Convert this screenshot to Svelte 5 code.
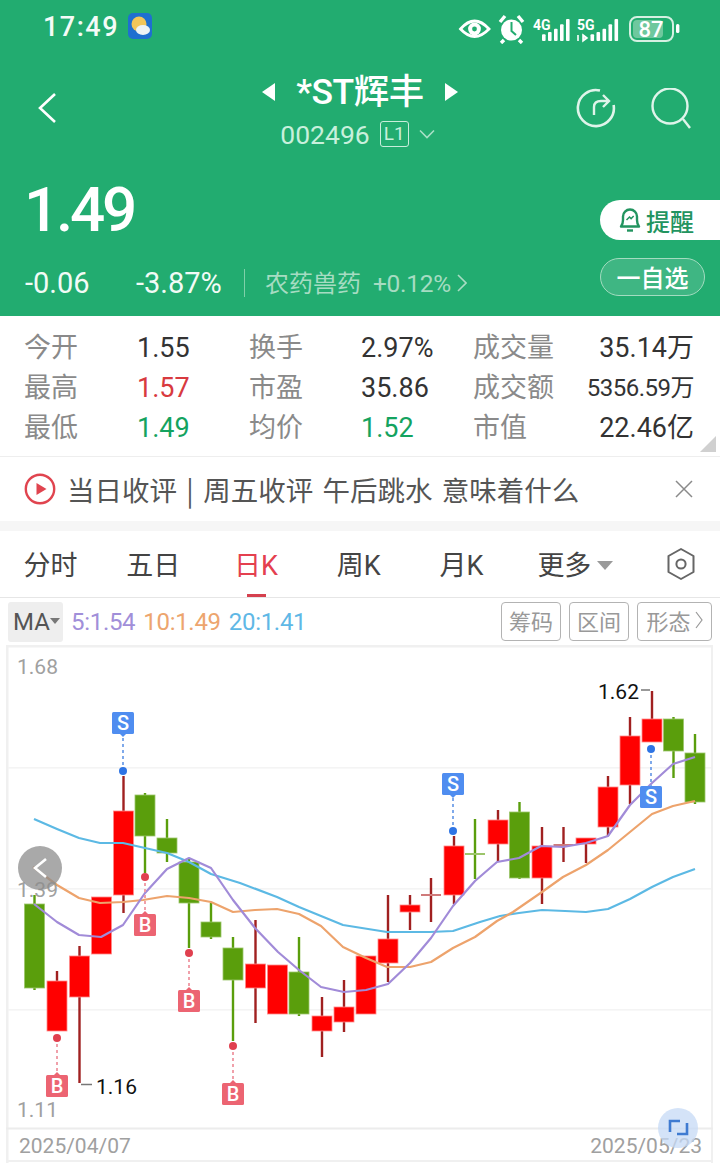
<script>
  const candles = [
    { x: 34.5, c: 'g', t: 904, b: 988, hi: 895, lo: 990 },
    { x: 57, c: 'r', t: 981, b: 1031, hi: 971, lo: 1031 },
    { x: 79.5, c: 'r', t: 956, b: 997, hi: 946, lo: 1083 },
    { x: 101.5, c: 'r', t: 897, b: 954, hi: 897, lo: 954 },
    { x: 123.5, c: 'r', t: 811, b: 895, hi: 776, lo: 913 },
    { x: 145, c: 'g', t: 795, b: 836, hi: 793, lo: 873 },
    { x: 167, c: 'g', t: 838, b: 853, hi: 819, lo: 862 },
    { x: 189, c: 'g', t: 862, b: 903, hi: 858, lo: 948 },
    { x: 211, c: 'g', t: 922, b: 937, hi: 903, lo: 939 },
    { x: 233, c: 'g', t: 948, b: 980, hi: 937, lo: 1041 },
    { x: 255.5, c: 'r', t: 964, b: 988, hi: 920, lo: 1023 },
    { x: 277.5, c: 'r', t: 965, b: 1014, hi: 965, lo: 1014 },
    { x: 299, c: 'g', t: 972, b: 1014, hi: 937, lo: 1016 },
    { x: 322, c: 'r', t: 1016, b: 1031, hi: 997, lo: 1057 },
    { x: 344, c: 'r', t: 1007, b: 1022, hi: 980, lo: 1032 },
    { x: 366, c: 'r', t: 956, b: 1014, hi: 956, lo: 1014 },
    { x: 388, c: 'r', t: 939, b: 963, hi: 895, lo: 982 },
    { x: 410, c: 'r', t: 905, b: 912, hi: 895, lo: 930 },
    { x: 431, c: 'r', t: 895, b: 896, hi: 878, lo: 922, doji: true },
    { x: 454, c: 'r', t: 846, b: 895, hi: 836, lo: 904 },
    { x: 475, c: 'g', t: 854, b: 855, hi: 819, lo: 879, doji: true },
    { x: 498, c: 'r', t: 820, b: 844, hi: 810, lo: 861 },
    { x: 519.5, c: 'g', t: 812, b: 878, hi: 802, lo: 879 },
    { x: 542, c: 'r', t: 846, b: 878, hi: 827, lo: 904 },
    { x: 563.5, c: 'r', t: 845, b: 846, hi: 827, lo: 862, doji: true },
    { x: 586, c: 'r', t: 838, b: 844, hi: 838, lo: 863 },
    { x: 608, c: 'r', t: 787, b: 827, hi: 776, lo: 836 },
    { x: 630, c: 'r', t: 736, b: 785, hi: 717, lo: 804 },
    { x: 652, c: 'r', t: 719, b: 742, hi: 691, lo: 742 },
    { x: 673.5, c: 'g', t: 719, b: 751, hi: 717, lo: 778 },
    { x: 695, c: 'g', t: 753, b: 802, hi: 734, lo: 804 }
  ];

  const ma5 = '34,904 57,922 79,935 101,937 123,925 145,893 167,869 189,858 211,868 233,900 255,928 278,952 299,970 321,987 344,992 366,990 388,984 410,963 431,938 453,906 475,881 497,862 519,858 541,846 563,847 586,843 608,836 630,805 652,783 673,764 695,757';
  const ma10 = '33,867 57,885 79,898 100,903 123,902 143,900 167,896 189,898 211,902 233,912 255,910 277,909 299,914 321,926 343,947 366,958 387,967 410,967 431,962 453,948 475,937 497,921 513,912 542,892 563,877 586,865 608,850 630,832 652,814 673,806 695,801';
  const ma20 = '34,819 57,829 79,838 100,843 123,843 145,848 167,853 189,862 211,874 240,883 277,897 299,907 343,925 387,932 430,932 453,931 480,922 500,916 519,913 542,910 565,911 586,912 608,909 630,899 652,887 673,877 695,869';

  const marks = [
    { k: 'S', x: 123, box: 712, dot: 771 },
    { k: 'B', x: 145, box: 914, dot: 877 },
    { k: 'B', x: 189, box: 990, dot: 953 },
    { k: 'B', x: 233, box: 1083, dot: 1046 },
    { k: 'B', x: 57, box: 1075, dot: 1038 },
    { k: 'S', x: 453, box: 773, dot: 831 },
    { k: 'S', x: 651, box: 786, dot: 749, flat: true }
  ];

  const stats = [
    ['今开', '1.55', '', '换手', '2.97%', '', '成交量', '35.14万', ''],
    ['最高', '1.57', 'up', '市盈', '35.86', '', '成交额', '5356.59万', 'small'],
    ['最低', '1.49', 'down', '均价', '1.52', 'down', '市值', '22.46亿', '']
  ];

  const tabs = ['分时', '五日', '日K', '周K', '月K', '更多'];
  const bars = (x0) => [20, 27, 37, 50, 66].map((h, i) => ({ x: x0 + i * 6, h: h / 3 }));
</script>

<div class="page">
  <header class="head">
    <div class="status">
      <span class="clock">17:49</span>
      <svg class="weather" viewBox="0 0 24 26" width="24" height="26">
        <rect width="24" height="26" rx="5" fill="#1f6fd0" />
        <circle cx="11" cy="11" r="7.5" fill="#f3c659" />
        <ellipse cx="15" cy="17" rx="7" ry="5" fill="#eef3f5" />
      </svg>
      <span class="spacer"></span>
      <svg class="sysicons" viewBox="458 10 224 32" width="224" height="32">
        <path d="M460.5 27 Q474.5 11 489 27 Q474.5 42 460.5 27Z" fill="none" stroke="#fff" stroke-width="2.8" />
        <circle cx="474.5" cy="27" r="6.4" fill="#fff" />
        <circle cx="474.5" cy="27" r="2.4" fill="#22ac70" />
        <circle cx="511.5" cy="28" r="10.5" fill="#fff" />
        <path d="M511.5 20V29L516 33" fill="none" stroke="#22ac70" stroke-width="2" />
        <path d="M500 20 L505 14M523 20 L518 14M504 38l-3 3M519 38l3 3" stroke="#fff" stroke-width="3.4" />
        <text class="net" x="533" y="28">4G</text>
        {#each bars(542) as b}
          <rect x={b.x} y={39 - b.h} width="3.6" height={b.h} rx="1" fill="#fff" />
        {/each}
        <text class="net" x="577" y="28">5G</text>
        <path d="M578 33v6M583 33l4 3-4 3Z" stroke="#fff" stroke-width="1.6" fill="#cfeede" />
        {#each bars(590.5) as b}
          <rect x={b.x} y={39 - b.h} width="3.6" height={b.h} rx="1" fill="#fff" />
        {/each}
        <rect x="630" y="15" width="43" height="24" rx="7" fill="none" stroke="#d5f0e2" stroke-width="2" />
        <rect x="633" y="18" width="30" height="18" rx="4" fill="#6fc89e" />
        <text class="batt" x="651" y="35" text-anchor="middle">87</text>
        <rect x="676" y="22" width="3.4" height="9" rx="1.5" fill="#fff" />
      </svg>
    </div>

    <div class="nav">
      <svg class="back" viewBox="0 0 20 32" width="20" height="32">
        <path d="M18 2 3 16 18 30" fill="none" stroke="#fff" stroke-width="2.6" />
      </svg>
      <div class="title-wrap">
        <div class="title">
          <i class="arrow left"></i>
          <span class="name">*ST辉丰</span>
          <i class="arrow right"></i>
        </div>
        <div class="code">
          <span class="digits">002496</span>
          <span class="l1">L1</span>
          <svg viewBox="0 0 16 10" width="16" height="10">
            <path d="M1 1.5 8 8.5 15 1.5" fill="none" stroke="#a8e0c6" stroke-width="1.6" />
          </svg>
        </div>
      </div>
      <div class="nav-actions">
        <svg viewBox="0 0 40 40" width="40" height="40">
          <path d="M24 2.6A18 18 0 1 0 37.6 17" fill="none" stroke="#dff4ea" stroke-width="2.6" />
          <path d="M18 27V19Q18 13 25 13H33M27 7l6 6-6 6" fill="none" stroke="#dff4ea" stroke-width="2.4" />
        </svg>
        <svg viewBox="0 0 42 42" width="42" height="42">
          <circle cx="20" cy="18" r="17.5" fill="none" stroke="#dff4ea" stroke-width="2.4" />
          <path d="M33 31 40 40" stroke="#dff4ea" stroke-width="2.4" />
        </svg>
      </div>
    </div>

    <div class="quote">
      <div class="quote-left">
        <div class="price">1.49</div>
        <div class="change">
          <span class="chg1">-0.06</span>
          <span class="chg2">-3.87%</span>
          <i class="vline"></i>
          <span class="sector">农药兽药</span>
          <span class="sector-pct">+0.12%</span>
          <svg viewBox="0 0 10 20" width="10" height="20">
            <path d="M1 2 9 10 1 18" fill="none" stroke="#a9dcc3" stroke-width="1.6" />
          </svg>
        </div>
      </div>
      <div class="quote-right">
        <div class="remind">
          <svg viewBox="0 0 24 26" width="24" height="26">
            <path d="M3 19.5Q5 17 5 13V9.5A7 7 0 0 1 19 9.5V13Q19 17 21 19.5Z" fill="none" stroke="#22945f" stroke-width="2.4" stroke-linejoin="round" />
            <path d="M9 23.5h6" stroke="#22945f" stroke-width="2.4" />
            <path d="M8.5 13l3-3 1.6 1.6 2.6-2.6" fill="none" stroke="#22945f" stroke-width="1.5" />
          </svg>
          <span>提醒</span>
        </div>
        <div class="watch">一自选</div>
      </div>
    </div>
  </header>

  <section class="stats">
    {#each stats as row}
      <div class="stat-row">
        <span class="lab">{row[0]}</span>
        <span class="val {row[2]}">{row[1]}</span>
        <span class="lab">{row[3]}</span>
        <span class="val {row[5]}">{row[4]}</span>
        <span class="lab">{row[6]}</span>
        <span class="val right {row[8]}">{row[7]}</span>
      </div>
    {/each}
    <i class="corner"></i>
  </section>

  <section class="news">
    <svg viewBox="0 0 32 32" width="32" height="32">
      <circle cx="16" cy="16" r="14.2" fill="none" stroke="#e0444f" stroke-width="2.4" />
      <path d="M12.5 10 22.5 16 12.5 22Z" fill="#e0444f" />
    </svg>
    <span class="news-text">当日收评 | 周五收评 午后跳水 意味着什么</span>
    <svg class="close" viewBox="0 0 18 18" width="18" height="18">
      <path d="M1 1 17 17M17 1 1 17" stroke="#8a8a8a" stroke-width="1.5" />
    </svg>
  </section>

  <div class="band"></div>

  <nav class="tabs">
    {#each tabs as t, i}
      <div class="tab" class:active={i === 2}>
        <span>{t}</span>
        {#if i === 5}<i class="tri"></i>{/if}
        {#if i === 2}<i class="under"></i>{/if}
      </div>
    {/each}
    <svg class="hex" viewBox="0 0 30 34" width="30" height="34">
      <path d="M15 2 27.5 9V25L15 32 2.5 25V9Z" fill="none" stroke="#666" stroke-width="2" stroke-linejoin="round" />
      <circle cx="15" cy="17" r="4.6" fill="none" stroke="#666" stroke-width="2" />
    </svg>
  </nav>

  <div class="ma-row">
    <div class="ma-btn">MA<i></i></div>
    <span class="ma m5">5:1.54</span>
    <span class="ma m10">10:1.49</span>
    <span class="ma m20">20:1.41</span>
    <span class="spacer"></span>
    <span class="tool">筹码</span>
    <span class="tool">区间</span>
    <span class="tool wide">形态
      <svg viewBox="0 0 8 18" width="8" height="18">
        <path d="M1 1 7 9 1 17" fill="none" stroke="#999" stroke-width="1.2" />
      </svg>
    </span>
  </div>

  <svg class="chart" viewBox="0 645 720 518" width="720" height="518">
    <rect x="6" y="645" width="2.5" height="518" fill="#f0f0f0" />
    <rect x="711" y="645" width="2" height="518" fill="#f0f0f0" />
    <rect x="6" y="645" width="707" height="2.5" fill="#f0f0f0" />
    {#each [767, 888, 1009] as y}
      <rect x="8" {y} width="703" height="1.6" fill="#f4f4f4" />
    {/each}
    <rect x="6" y="1127.5" width="707" height="2" fill="#ececec" />
    <rect x="6" y="1160" width="707" height="2" fill="#f0f0f0" />

    {#each candles as k}
      <line x1={k.x} x2={k.x} y1={k.hi} y2={k.lo} class={k.c === 'r' ? 'wick-r' : 'wick-g'} />
      {#if k.doji}
        <line x1={k.x - 10} x2={k.x + 10} y1={k.t} y2={k.t} class={k.c === 'r' ? 'doji-r' : 'doji-g'} />
      {:else}
        <rect x={k.x - 10} y={k.t} width="20" height={k.b - k.t} class={k.c === 'r' ? 'body-r' : 'body-g'} />
      {/if}
    {/each}

    <polyline points={ma20} class="line l20" />
    <polyline points={ma10} class="line l10" />
    <polyline points={ma5} class="line l5" />

    {#each marks as m}
      {@const isS = m.k === 'S'}
      <line x1={m.x} x2={m.x} y1={m.dot} y2={m.box < m.dot ? m.box + 22 : m.box} class={isS ? 'dash-s' : 'dash-b'} />
      <circle cx={m.x} cy={m.dot} r="4" fill={isS ? '#2e74e4' : '#e0404f'} />
      <rect x={m.x - 11} y={m.box} width="22" height="22" rx="1.5" fill={isS ? '#4f8df0' : '#ec6472'} />
      {#if !m.flat}
        {#if isS}
          <path d="M{m.x - 4} {m.box + 21}h8l-4 4Z" fill="#4f8df0" />
        {:else}
          <path d="M{m.x - 4} {m.box + 1}h8l-4 -4Z" fill="#ec6472" />
        {/if}
      {/if}
      <text x={m.x} y={m.box + 18} class="mark-t" text-anchor="middle">{m.k}</text>
    {/each}

    <line x1="81" x2="92" y1="1084.5" y2="1084.5" stroke="#777" stroke-width="1.5" />
    <text x="96" y="1094" class="ext">1.16</text>
    <line x1="641" x2="650" y1="690" y2="690" stroke="#777" stroke-width="1.5" />
    <text x="598" y="699" class="ext">1.62</text>

    <text x="17" y="674" class="axis">1.68</text>
    <text x="17" y="897" class="axis">1.39</text>
    <text x="17" y="1117" class="axis">1.11</text>
    <text x="19" y="1153" class="axis">2025/04/07</text>
    <text x="702" y="1153" class="axis" text-anchor="end">2025/05/23</text>

    <circle cx="40" cy="868" r="22" fill="#8c8c8c" opacity="0.75" />
    <path d="M46 859 35 868 46 877" fill="none" stroke="#fff" stroke-width="2.6" />

    <circle cx="678" cy="1128" r="20" fill="#c6d9f6" opacity="0.75" />
    <path d="M670 1132V1121H680M687 1123V1134H677" fill="none" stroke="#3f7bd1" stroke-width="2.6" />
  </svg>
</div>

<style>
  :global(body) {
    margin: 0;
    background: #fff;
  }
  .page {
    width: 720px;
    height: 1163px;
    overflow: hidden;
    font-family: Roboto, "Noto Sans CJK SC", sans-serif;
    color: #333;
  }
  .head {
    background: #22ac70;
    height: 316px;
    color: #fff;
    box-sizing: border-box;
  }
  .spacer {
    flex: 1;
  }
  .status {
    display: flex;
    align-items: center;
    height: 54px;
    padding: 0 40px 0 43px;
    gap: 9px;
  }
  .clock {
    font-family: Roboto, sans-serif;
    font-size: 27px;
    letter-spacing: 1.5px;
    font-weight: 500;
    color: #f4fbf7;
  }
  .weather {
    margin-top: -2px;
  }
  .sysicons {
    margin-right: -2px;
    margin-top: 2px;
  }
  .net {
    font: 700 14px Roboto, sans-serif;
    fill: #fff;
  }
  .batt {
    font: 500 22px Roboto, sans-serif;
    fill: #fff;
  }
  .nav {
    display: flex;
    justify-content: space-between;
    height: 104px;
    padding: 16px 28px 0 37px;
    box-sizing: border-box;
    position: relative;
  }
  .back {
    margin-top: 22px;
  }
  .title-wrap {
    position: absolute;
    left: 0;
    right: 0;
    top: 16px;
    display: flex;
    flex-direction: column;
    align-items: center;
    pointer-events: none;
  }
  .title {
    display: flex;
    align-items: center;
    gap: 21px;
    height: 44px;
  }
  .name {
    font-family: Roboto, "Noto Sans CJK SC", sans-serif;
    font-size: 35.5px;
    font-weight: 500;
    letter-spacing: -0.5px;
    line-height: 44px;
  }
  .arrow {
    width: 0;
    height: 0;
    border-top: 9px solid transparent;
    border-bottom: 9px solid transparent;
  }
  .arrow.left {
    border-right: 13px solid #fff;
  }
  .arrow.right {
    border-left: 13px solid #fff;
  }
  .code {
    display: flex;
    align-items: center;
    gap: 10px;
    height: 30px;
    margin-top: 5px;
    margin-left: -5px;
    color: #c8f0dc;
  }
  .digits {
    font-family: Roboto, sans-serif;
    font-size: 26.5px;
    letter-spacing: 0;
  }
  .l1 {
    width: 29px;
    height: 26px;
    border: 1px solid #c8eedb;
    border-radius: 3px;
    box-sizing: border-box;
    text-align: center;
    font: 400 19px/24px Roboto, sans-serif;
  }
  .nav-actions {
    display: flex;
    gap: 34px;
    margin-top: 18px;
    height: 42px;
  }
  .nav-actions svg {
    display: block;
  }
  .quote {
    display: flex;
    justify-content: space-between;
  }
  .quote-left {
    padding: 16px 0 0 26px;
  }
  .price {
    font-family: Roboto, sans-serif;
    font-size: 62px;
    font-weight: 500;
    line-height: 72px;
    letter-spacing: -3.2px;
    margin-left: -2px;
    color: #fff;
  }
  .change {
    display: flex;
    align-items: center;
    height: 32px;
    margin-top: 21px;
    margin-left: -1px;
    font-family: Roboto, "Noto Sans CJK SC", sans-serif;
    font-size: 29px;
    letter-spacing: 0;
    color: #f2fbf6;
  }
  .chg1 {
    width: 111px;
  }
  .chg2 {
    width: 108px;
  }
  .vline {
    width: 1px;
    height: 28px;
    background: #7fd0a9;
    margin-right: 20px;
  }
  .sector {
    color: #a6dcc2;
    font-size: 24px;
    letter-spacing: 0;
    width: 108px;
    margin-top: -3px;
  }
  .sector-pct {
    color: #a6dcc2;
    font-size: 24.5px;
    letter-spacing: -0.3px;
    margin-right: 6px;
  }
  .quote-right {
    display: flex;
    flex-direction: column;
    align-items: flex-start;
    width: 120px;
    padding-top: 42px;
    gap: 18px;
  }
  .remind {
    width: 120px;
    height: 40px;
    background: #fff;
    border-radius: 20px 0 0 20px;
    display: flex;
    align-items: center;
    gap: 4px;
    padding-left: 18px;
    box-sizing: border-box;
    color: #22945f;
    font: 500 24px "Noto Sans CJK SC", sans-serif;
  }
  .watch {
    width: 105px;
    height: 38px;
    border: 1px solid #a3dcc0;
    background: #3fb683;
    border-radius: 19px;
    box-sizing: border-box;
    text-align: center;
    font: 500 24px/35px "Noto Sans CJK SC", sans-serif;
    color: #fff;
  }
  .stats {
    height: 141px;
    padding: 11px 26px 0 24px;
    box-sizing: border-box;
    position: relative;
    border-bottom: 1px solid #eee;
  }
  .stat-row {
    display: grid;
    grid-template-columns: 113px 112px 112px 112px 1fr auto;
    height: 40px;
    align-items: center;
    line-height: 40px;
  }
  .lab {
    font: 400 27px/36px "Noto Sans CJK SC", sans-serif;
    color: #8a8a8a;
    margin-top: -4px;
  }
  .val {
    font-family: Roboto, "Noto Sans CJK SC", sans-serif;
    font-size: 27px;
    line-height: 42px;
    letter-spacing: 0;
    color: #333;
  }
  .val.right {
    grid-column: 6;
    text-align: right;
  }
  .val.up {
    color: #d83a3f;
  }
  .val.down {
    color: #14a35f;
  }
  .val.small {
    font-size: 24px;
    letter-spacing: -0.5px;
  }
  .corner {
    position: absolute;
    right: 4px;
    bottom: 4px;
    width: 0;
    height: 0;
    border-left: 16px solid transparent;
    border-bottom: 16px solid #d0d0d0;
  }
  .news {
    height: 64px;
    display: flex;
    align-items: center;
    padding: 0 27px 0 24px;
    box-sizing: border-box;
    gap: 11px;
  }
  .news-text {
    flex: 1;
    font: 400 27.5px "Noto Sans CJK SC", sans-serif;
    word-spacing: 3.2px;
    color: #555;
    white-space: nowrap;
  }
  .band {
    height: 10px;
    background: #f6f6f6;
  }
  .tabs {
    height: 66px;
    display: grid;
    grid-template-columns: repeat(6, 102.8px) 1fr;
    align-items: center;
    position: relative;
    border-bottom: 1px solid #e6e6e6;
    box-sizing: content-box;
    margin-left: -1px;
  }
  .tab {
    position: relative;
    text-align: center;
    font: 400 27px/70px Roboto, "Noto Sans CJK SC", sans-serif;
    color: #444;
    height: 66px;
  }
  .tab.active {
    color: #e4404f;
  }
  .tri {
    position: absolute;
    left: calc(50% + 33px);
    top: 30px;
    width: 0;
    height: 0;
    border-left: 8px solid transparent;
    border-right: 8px solid transparent;
    border-top: 9px solid #9a9a9a;
  }
  .under {
    position: absolute;
    left: 50%;
    bottom: 0;
    margin-left: -9px;
    width: 19px;
    height: 3px;
    background: #d5404e;
  }
  .hex {
    justify-self: end;
    margin-right: 24px;
  }
  .ma-row {
    height: 47px;
    display: flex;
    align-items: center;
    padding: 0 8px;
    box-sizing: border-box;
    gap: 8px;
  }
  .ma-btn {
    width: 55px;
    height: 40px;
    background: #eee;
    border-radius: 3px;
    font: 400 24px/40px Roboto, sans-serif;
    color: #555;
    padding-left: 5px;
    box-sizing: border-box;
    position: relative;
  }
  .ma-btn i {
    position: absolute;
    right: 3px;
    top: 16px;
    width: 0;
    height: 0;
    border-left: 5px solid transparent;
    border-right: 5px solid transparent;
    border-top: 6px solid #777;
  }
  .ma {
    font: 400 24px Roboto, sans-serif;
    letter-spacing: -0.3px;
  }
  .m5 {
    color: #a18fd9;
  }
  .m10 {
    color: #eda56e;
  }
  .m20 {
    color: #5fb8e6;
  }
  .tool {
    width: 60px;
    height: 39px;
    border: 1px solid #b3b3b3;
    border-radius: 4px;
    box-sizing: border-box;
    padding-bottom: 3px;
    font: 400 22px/36px "Noto Sans CJK SC", sans-serif;
    color: #999;
    text-align: center;
    display: flex;
    align-items: center;
    justify-content: center;
    gap: 4px;
  }
  .tool.wide {
    width: 75px;
  }
  .chart {
    display: block;
  }
  .wick-r {
    stroke: #a02020;
    stroke-width: 2.4;
  }
  .wick-g {
    stroke: #5a9e0c;
    stroke-width: 2.4;
  }
  .doji-r {
    stroke: #cf7a7a;
    stroke-width: 2;
  }
  .doji-g {
    stroke: #9cc56b;
    stroke-width: 2;
  }
  .body-r {
    fill: #ff0000;
    stroke: #ff8a8a;
    stroke-width: 0.8;
  }
  .body-g {
    fill: #5a9e0c;
    stroke: #9cc56b;
    stroke-width: 0.8;
  }
  .line {
    fill: none;
    stroke-width: 2.2;
    stroke-linejoin: round;
  }
  .l5 {
    stroke: #a18bd8;
  }
  .l10 {
    stroke: #eda36c;
  }
  .l20 {
    stroke: #5cb9e4;
  }
  .dash-s {
    stroke: #7fa9ea;
    stroke-width: 2;
    stroke-dasharray: 3 3;
  }
  .dash-b {
    stroke: #f0a0aa;
    stroke-width: 2;
    stroke-dasharray: 3 3;
  }
  .mark-t {
    font: 500 20px Roboto, sans-serif;
    fill: #fff;
  }
  .ext {
    font: 400 21px Roboto, sans-serif;
    fill: #111;
  }
  .axis {
    font: 400 21px Roboto, sans-serif;
    fill: #a0a0a0;
  }
</style>
